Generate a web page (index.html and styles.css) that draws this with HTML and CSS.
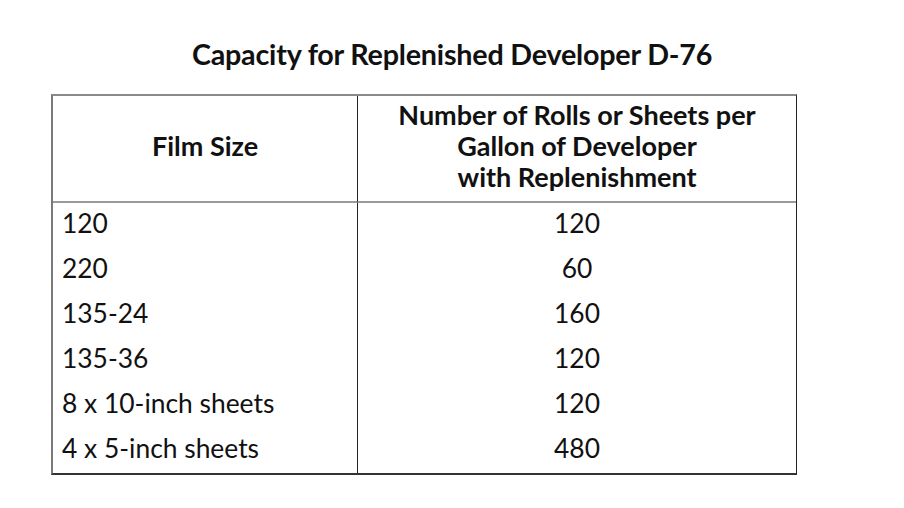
FILE: index.html
```html
<!DOCTYPE html>
<html>
<head>
<meta charset="utf-8">
<link rel="stylesheet" href="styles.css">
</head>
<body>
<div class="page">
  <h1 class="title">Capacity for Replenished Developer D-76</h1>
  <table class="cap">
    <thead>
      <tr>
        <th class="c1">Film Size</th>
        <th class="c2">Number of Rolls or Sheets per<br>Gallon of Developer<br>with Replenishment</th>
      </tr>
    </thead>
    <tbody>
      <tr><td class="c1">120</td><td class="c2">120</td></tr>
      <tr><td class="c1">220</td><td class="c2">60</td></tr>
      <tr><td class="c1">135-24</td><td class="c2">160</td></tr>
      <tr><td class="c1">135-36</td><td class="c2">120</td></tr>
      <tr><td class="c1">8 x 10-inch sheets</td><td class="c2">120</td></tr>
      <tr><td class="c1">4 x 5-inch sheets</td><td class="c2">480</td></tr>
    </tbody>
  </table>
</div>
</body>
</html>
```

FILE: styles.css
```css
html, body {
  margin: 0;
  padding: 0;
  background: #ffffff;
}
.page {
  width: 904px;
  height: 508px;
  font-family: Lato, "Open Sans", sans-serif;
  color: #111;
  padding-top: 35px;
  box-sizing: border-box;
}
.title {
  margin: 0;
  font-size: 28.7px;
  font-weight: 700;
  text-align: center;
  line-height: 38px;
  height: 59px;
  letter-spacing: -0.2px;
}
.cap {
  margin-left: 51px;
  width: 746px;
  table-layout: fixed;
  border-collapse: separate;
  border-spacing: 0;
  border-top: 2px solid #8a8a8a;
  border-left: 2px solid #7a7a7a;
  border-right: 1px solid #222;
  border-bottom: 2px solid #333;
}
.cap th, .cap td {
  box-sizing: border-box;
}
.cap th {
  font-size: 27px;
  font-weight: 700;
  line-height: 31px;
  height: 107px;
  padding: 0 0 6px 0;
  border-bottom: 2px solid #9a9a9a;
  vertical-align: middle;
  text-align: center;
}
.cap .c1 {
  width: 305px;
  border-right: 1px solid #222;
}
.cap td {
  font-size: 26.4px;
  font-weight: 400;
  height: 45px;
  padding: 0 0 5px 0;
  line-height: 40px;
  vertical-align: middle;
}
.cap td.c1 {
  padding-left: 9px;
  text-align: left;
}
.cap td.c2 {
  text-align: center;
}
```
